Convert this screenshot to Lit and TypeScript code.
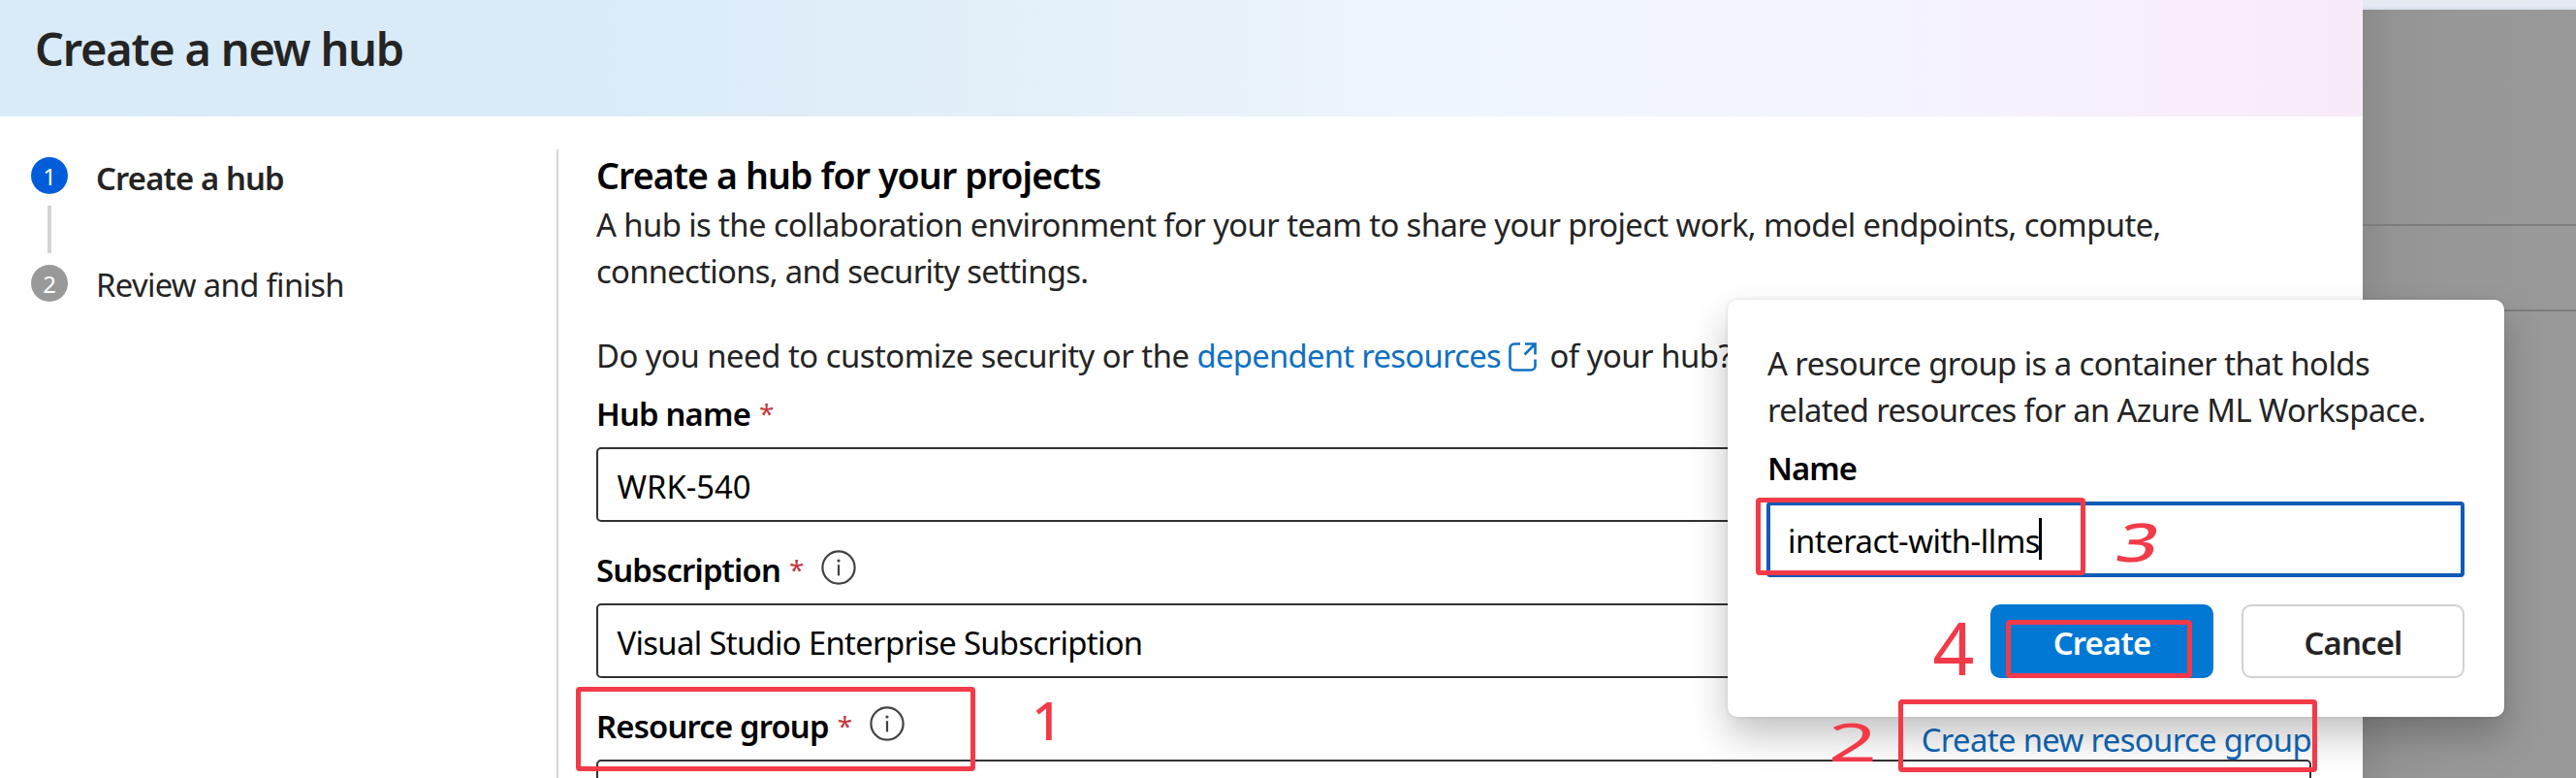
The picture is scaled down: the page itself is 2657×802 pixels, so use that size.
import { LitElement, html, css } from "lit";
import { customElement, property } from "lit/decorators.js";

@customElement("info-icon")
class InfoIcon extends LitElement {
  static styles = css`
    :host { display: block; width: 36px; height: 36px; flex: none; }
    svg { display: block; }
  `;
  render() {
    return html`<svg width="36" height="36" viewBox="0 0 36 36" fill="none" stroke="#424242">
      <circle cx="18" cy="18" r="16.600" stroke-width="2.200"></circle>
      <path d="M18 15.200V26.400" stroke-width="2.200"></path>
      <circle cx="18" cy="11" r="1.600" fill="#424242" stroke="none"></circle>
    </svg>`;
  }
}

@customElement("form-field")
class FormField extends LitElement {
  @property() label = "";
  @property() value = "";
  @property({ type: Boolean }) info = false;
  static styles = css`
    :host { display: block; height: 161px; }
    .head { display: flex; height: 59px; align-items: flex-start; }
    .name { font-weight: 600; color: #000; line-height: 50px; white-space: pre; letter-spacing: -0.82px; }
    .star { color: #c4373d; line-height: 48px; margin-left: 9px; width: 33px; font-size: 28px; flex: none; }
    info-icon { margin-top: 4px; }
    .box { box-sizing: border-box; height: 77px; border: 2px solid #333132; border-radius: 5px; padding: 4px 19.5px 0;
      line-height: 69px; color: #000; white-space: pre; }
    .long { letter-spacing: -0.66px; }
  `;
  render() {
    return html`<div class="head"><span class="name">${this.label}</span><span class="star">*</span>
      ${this.info ? html`<info-icon></info-icon>` : null}<slot></slot></div>
      <div class="box ${this.value.length > 10 ? "long" : ""}">${this.value}</div>`;
  }
}

@customElement("app-root")
class AppRoot extends LitElement {
  static styles = css`
    :host { display: block; position: relative; width: 2657px; height: 802px; overflow: hidden; background: #999;
      font-family: "Noto Sans", "Open Sans", sans-serif; font-size: 32.8px; color: #242424; white-space: nowrap; }
    .page { display: flex; height: 802px; }
    .panel { width: 2437px; height: 802px; background: #fff; display: flex; flex-direction: column; overflow: hidden; flex: none; }
    .title { flex: none; height: 120px; box-sizing: border-box; padding: 17.5px 0 0 36px; line-height: 64px; font-size: 46.9px; font-weight: 600; letter-spacing: -1.2px;
      background: linear-gradient(90deg, #d9eaf8 0%, #daebf8 25%, #e6f1fa 48%, #f0f6fe 64%, #f4f4fd 80%, #f8edf9 94%, #f8ebf9 100%); }
    .body { display: flex; flex: 1; min-height: 0; }
    .steps { box-sizing: border-box; width: 574px; padding: 42px 0 0 32px; flex: none; }
    .step { display: flex; height: 38px; align-items: center; gap: 29px; }
    .dot { width: 38px; height: 38px; border-radius: 50%; background: #015cda; color: #fff; font-size: 24px; line-height: 40px; text-align: center; }
    .dot.off { background: #999; }
    .link { width: 4px; height: 49px; background: #d4d4d4; margin: 12px 0 12px 17px; }
    .s1 { font-weight: 600; letter-spacing: -0.85px; padding-top: 4px; }
    .s2 { letter-spacing: -0.67px; padding-top: 3px; }
    .rule { width: 2px; background: #d6d6d6; margin-top: 34px; flex: none; }
    .form { width: 1769px; margin-left: 39px; padding-top: 35px; flex: none; }
    .h { height: 52px; line-height: 52px; font-size: 37.5px; font-weight: 600; color: #000; letter-spacing: -0.89px; }
    .p { line-height: 50px; height: 48px; }
    .p1 { letter-spacing: -0.59px; }
    .p2 { letter-spacing: -0.7px; }
    .q { margin-top: 39px; height: 48px; line-height: 50px; display: flex; letter-spacing: -0.48px; }
    .a { color: #1068b8; }
    .q .a { letter-spacing: -0.71px; color: #1070c0; }
    .ext { margin: 11px 12px 0 8.5px; flex: none; }
    .fields { margin-top: 12px; }
    .new { flex: 1; text-align: right; line-height: 50px; padding-top: 13.5px; letter-spacing: -0.63px; }
    .back { flex: 1; display: flex; flex-direction: column; background: linear-gradient(90deg, #8b8b8b, #949494 15%, #989898 40%, #999); }
    .strip { height: 10px; background: linear-gradient(#e6ebf3, #e2e9f2 60%, #d8dfeb); }
    .g1 { height: 221px; border-bottom: 2px solid #7c7c7c; }
    .g2 { height: 86px; border-bottom: 2px solid #7c7c7c; }
    .pop { position: absolute; left: 1782px; top: 309px; width: 801px; height: 430px; box-sizing: border-box; background: #fff; border-radius: 10px;
      padding: 41px 41px 0 41px; box-shadow: 0 0 4px rgba(0,0,0,.12), 0 19px 38px rgba(0,0,0,.24); }
    .d1 { letter-spacing: -0.56px; }
    .d2 { letter-spacing: -0.63px; }
    .lab { color: #000; font-weight: 600; line-height: 50px; height: 48px; margin-top: 12px; letter-spacing: -1px; }
    .inp { margin: 11px 0 0 -1px; width: 720px; height: 78px; box-sizing: border-box; border: 4px solid #0f5bb5; border-radius: 4px; padding: 12px 18px 0; display: flex; color: #000; line-height: 50px; letter-spacing: -0.48px; }
    .caret { width: 3px; height: 43px; background: #000; margin: 1px 0 0 -1px; }
    .btns { display: flex; justify-content: flex-end; gap: 29px; margin-top: 28px; }
    .btn { width: 230px; height: 76px; box-sizing: border-box; border-radius: 10px; border: 2px solid #d1d1d1; text-align: center; font-weight: 600; line-height: 75px; letter-spacing: -0.8px; }
    .pri { background: #0078d4; border-color: #0078d4; color: #fff; }
    .mark { position: absolute; box-sizing: border-box; border: 5px solid #f23a49; border-radius: 4px; }
    .m1 { left: 594px; top: 708px; width: 412px; height: 87px; }
    .m2 { left: 1958px; top: 721px; width: 432px; height: 75px; }
    .m3 { left: 1811px; top: 513px; width: 340px; height: 80px; }
    .m4 { left: 2069px; top: 639px; width: 192px; height: 60px; }
    .ink { position: absolute; width: 80px; text-align: center; color: #f23a49; line-height: 1; font-size: 55px; font-weight: 500; }
    .n1 { left: 1040px; top: 714px; }
    .n2 { left: 1871px; top: 736px; transform: scaleX(1.6); font-weight: 400; }
    .n3 { left: 2166px; top: 530px; transform: scaleX(1.35) skewX(-10deg); }
    .n4 { left: 1975px; top: 630px; font-size: 75px; font-weight: 400; }
  `;
  render() {
    return html`
      <div class="page">
        <div class="panel">
          <div class="title">Create a new hub</div>
          <div class="body">
            <div class="steps">
              <div class="step"><div class="dot">1</div><span class="s1">Create a hub</span></div>
              <div class="link"></div>
              <div class="step"><div class="dot off">2</div><span class="s2">Review and finish</span></div>
            </div>
            <div class="rule"></div>
            <div class="form">
              <div class="h">Create a hub for your projects</div>
              <div class="p p1">A hub is the collaboration environment for your team to share your project work, model endpoints, compute,</div>
              <div class="p p2">connections, and security settings.</div>
              <div class="q"><span>Do you need to customize security or the&nbsp;</span><span class="a">dependent resources</span>
                <svg class="ext" width="30" height="30" viewBox="0 0 30 30" fill="none" stroke="#1070c0" stroke-width="2.600"><path d="M12 1.500H6A4.500 4.500 0 0 0 1.500 6V24A4.500 4.500 0 0 0 6 28.500H23A4.500 4.500 0 0 0 27.500 24V17.500M17 1.500H27.500V12.500M27 2L16.500 12.500"></path></svg>
                <span>of your hub?</span></div>
              <div class="fields">
                <form-field label="Hub name" value="WRK-540"></form-field>
                <form-field label="Subscription" value="Visual Studio Enterprise Subscription" info></form-field>
                <form-field label="Resource group" info><span class="new a">Create new resource group</span></form-field>
              </div>
            </div>
          </div>
        </div>
        <div class="back"><div class="strip"></div><div class="g1"></div><div class="g2"></div></div>
      </div>
      <div class="pop">
        <div class="p d1">A resource group is a container that holds</div>
        <div class="p d2">related resources for an Azure ML Workspace.</div>
        <div class="lab">Name</div>
        <div class="inp"><span>interact-with-llms</span><div class="caret"></div></div>
        <div class="btns"><div class="btn pri">Create</div><div class="btn">Cancel</div></div>
      </div>
      <div class="mark m1"></div><div class="mark m2"></div><div class="mark m3"></div><div class="mark m4"></div>
      <div class="ink n1">1</div><div class="ink n2">2</div><div class="ink n3">3</div><div class="ink n4">4</div>
    `;
  }
}
